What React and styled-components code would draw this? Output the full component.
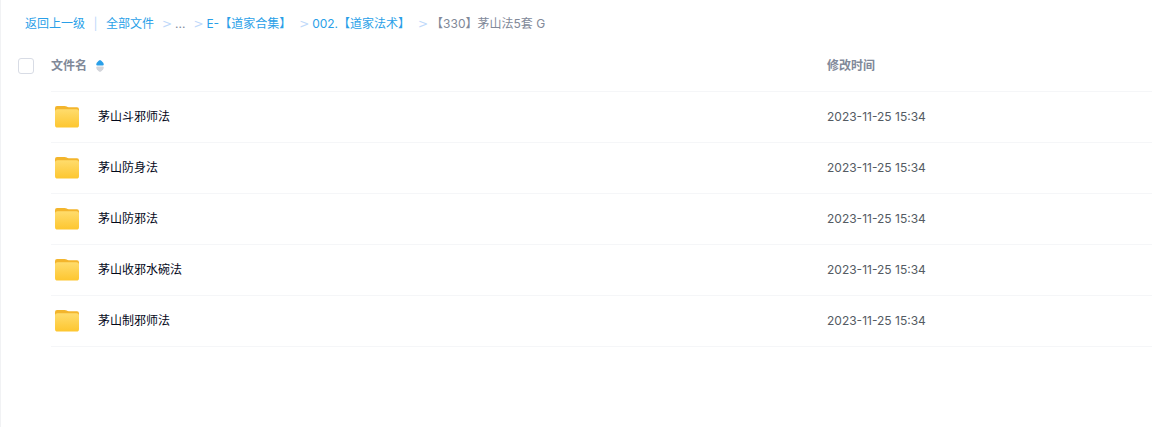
import React, { useState } from 'react'
import styled, { createGlobalStyle } from 'styled-components'

// Style Section
const colors = {
  link: '#2a9fe8',
  muted: '#818999',
  text: '#03081a',
  date: '#545b63',
  line: '#f5f6f8',
  separator: '#c0d9fa',
}

const GlobalStyle = createGlobalStyle`
  body {
    margin: 0;
    background: #fff;
    font-family: Inter, "Noto Sans CJK SC", sans-serif;
    font-size: 12px;
    line-height: 18px;
  }
`

const Page = styled.main`
  min-height: 100vh;
  box-sizing: border-box;
  border-left: 1px solid #f1f2f4;
`

const Breadcrumb = styled.nav`
  display: flex;
  align-items: center;
  height: 40px;
  padding: 8px 24px 0;
  box-sizing: border-box;
  white-space: nowrap;

  ol {
    display: flex;
    list-style: none;
    margin: 0;
    padding: 0;
  }

  li {
    display: flex;
    color: ${colors.muted};
  }

  li + li::before {
    content: '>';
    width: 13px;
    margin-left: 8px;
    color: ${colors.separator};
    font-family: "DejaVu Sans", sans-serif;
  }
`

const CrumbLink = styled.a`
  color: ${colors.link};
  text-decoration: none;
`

const Divider = styled.span`
  width: 21px;
  text-align: center;
  color: ${colors.separator};
`

const FileTable = styled.table`
  width: 100%;
  table-layout: fixed;
  border-collapse: separate;
  border-spacing: 0;

  th, td {
    height: 50px;
    padding: 0;
    text-align: left;
    border-bottom: 1px solid ${colors.line};
  }

  th {
    height: 51px;
    color: ${colors.muted};
    font-weight: 700;
  }

  th:first-child, td:first-child {
    border-bottom: 0;
  }
`

const SelectColumn = styled.col`
  width: 50px;
`

const DateColumn = styled.col`
  width: 325px;
`

const Checkbox = styled.input`
  appearance: none;
  display: block;
  width: 16px;
  height: 16px;
  margin: 0 0 0 17px;
  box-sizing: border-box;
  border: 1px solid #d8dce5;
  border-radius: 3px;
  background: #fff;

  &:checked {
    background: ${colors.link};
    border-color: ${colors.link};
  }
`

const SortButton = styled.button`
  display: flex;
  align-items: center;
  gap: 9px;
  padding: 0;
  border: 0;
  background: none;
  color: inherit;
  font: inherit;
  cursor: pointer;
`

const FileName = styled.div`
  display: flex;
  align-items: center;
  gap: 19px;
  padding-left: 4px;
  color: ${colors.text};
`

const FileDate = styled.time`
  color: ${colors.date};
`

const SortIcon = ({ ascending }) => (
  <svg width="8" height="12" viewBox="0 0 8 12" aria-hidden="true">
    <path d="M4 0 Q5 0 7.2 2.8 Q8.6 5.5 6.6 5.5 H1.4 Q-0.6 5.5 0.8 2.8 Q3 0 4 0 Z" fill={ascending ? '#2a9fe8' : '#d2d4da'} />
    <path d="M4 12 Q5 12 7.2 9.2 Q8.6 6.5 6.6 6.5 H1.4 Q-0.6 6.5 0.8 9.2 Q3 12 4 12 Z" fill={ascending ? '#d2d4da' : '#2a9fe8'} />
  </svg>
)

const FolderIcon = () => (
  <svg width="24" height="22" viewBox="0 0 24 22" aria-hidden="true">
    <defs>
      <linearGradient id="folder" x1="0" y1="0" x2="0" y2="1">
        <stop offset="0" stopColor="#ffdc6c" />
        <stop offset="1" stopColor="#fdc62f" />
      </linearGradient>
    </defs>
    <path d="M0 2 Q0 0 2 0 H9.5 Q11 0 11.7 0.6 Q12.5 1.2 13.7 1.2 H22 Q24 1.2 24 3.4 V12 H0 Z" fill="#f3b52c" />
    <path d="M0 6 Q0 3.3 2.6 3.3 H21.4 Q24 3.3 24 6 V19 Q24 21.6 21.5 21.6 H2.5 Q0 21.6 0 19 Z" fill="url(#folder)" />
  </svg>
)

const crumbs = [
  { name: '全部文件', link: true },
  { name: '...' },
  { name: 'E-【道家合集】', link: true },
  { name: '002.【道家法术】', link: true },
  { name: '【330】茅山法5套 G' },
]

const files = [
  { name: '茅山斗邪师法', date: '2023-11-25 15:34' },
  { name: '茅山防身法', date: '2023-11-25 15:34' },
  { name: '茅山防邪法', date: '2023-11-25 15:34' },
  { name: '茅山收邪水碗法', date: '2023-11-25 15:34' },
  { name: '茅山制邪师法', date: '2023-11-25 15:34' },
]

export default function App() {
  const [ascending, setAscending] = useState(true)

  return (
    <Page>
      <GlobalStyle />
      <Breadcrumb>
        <CrumbLink href="#back">返回上一级</CrumbLink>
        <Divider>|</Divider>
        <ol>
          {crumbs.map(crumb => (
            <li key={crumb.name}>
              {crumb.link ? <CrumbLink href="#folder">{crumb.name}</CrumbLink> : crumb.name}
            </li>
          ))}
        </ol>
      </Breadcrumb>
      <FileTable>
        <colgroup>
          <SelectColumn />
          <col />
          <DateColumn />
        </colgroup>
        <thead>
          <tr>
            <th><Checkbox type="checkbox" aria-label="全选" /></th>
            <th>
              <SortButton type="button" onClick={() => setAscending(!ascending)}>
                文件名
                <SortIcon ascending={ascending} />
              </SortButton>
            </th>
            <th>修改时间</th>
          </tr>
        </thead>
        <tbody>
          {files.map(file => (
            <tr key={file.name}>
              <td />
              <td>
                <FileName>
                  <FolderIcon />
                  {file.name}
                </FileName>
              </td>
              <td><FileDate>{file.date}</FileDate></td>
            </tr>
          ))}
        </tbody>
      </FileTable>
    </Page>
  )
}
